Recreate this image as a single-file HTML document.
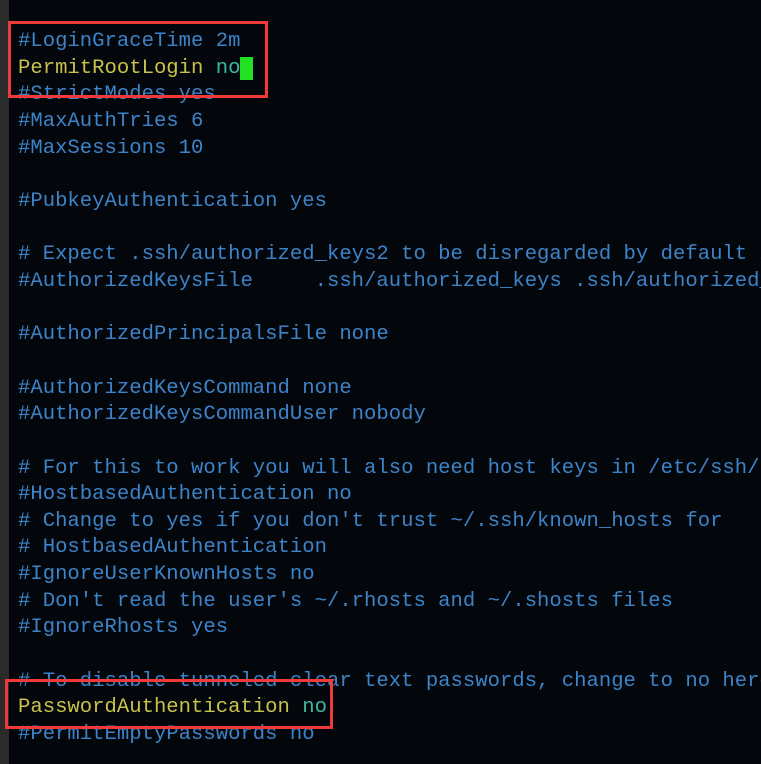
<!DOCTYPE html><html><head><style>
body{margin:0;width:761px;height:764px;background:#03070c;overflow:hidden;position:relative;font-family:"Liberation Mono",monospace}
.strip{position:absolute;left:0;top:0;width:9px;height:764px;background:#2b2b2b}
.wrap{position:absolute;left:18px;top:29px;width:743px;height:735px;overflow:hidden}
pre{margin:0;font-size:20.6px;line-height:26.65px;color:#3d83c8;font-family:"Liberation Mono",monospace;white-space:pre}
.y{color:#c9c24a}.g{color:#3cb8a0}.c{background:#22e022;color:#22e022}
.box{position:absolute;border:3px solid #f03a3a}
</style></head><body><div class="strip"></div>
<div class="wrap"><pre>#LoginGraceTime 2m
<span class="y">PermitRootLogin</span> <span class="g">no</span><span class="c"> </span>
#StrictModes yes
#MaxAuthTries 6
#MaxSessions 10

#PubkeyAuthentication yes

# Expect .ssh/authorized_keys2 to be disregarded by default in future.
#AuthorizedKeysFile     .ssh/authorized_keys .ssh/authorized_keys2

#AuthorizedPrincipalsFile none

#AuthorizedKeysCommand none
#AuthorizedKeysCommandUser nobody

# For this to work you will also need host keys in /etc/ssh/ssh_known_hosts
#HostbasedAuthentication no
# Change to yes if you don't trust ~/.ssh/known_hosts for
# HostbasedAuthentication
#IgnoreUserKnownHosts no
# Don't read the user's ~/.rhosts and ~/.shosts files
#IgnoreRhosts yes

# To disable tunneled clear text passwords, change to no here!
<span class="y">PasswordAuthentication</span> <span class="g">no</span>
#PermitEmptyPasswords no</pre></div>
<div class="box" style="left:8px;top:21px;width:254px;height:71px"></div>
<div class="box" style="left:5px;top:679px;width:322px;height:44px"></div>
</body></html>
